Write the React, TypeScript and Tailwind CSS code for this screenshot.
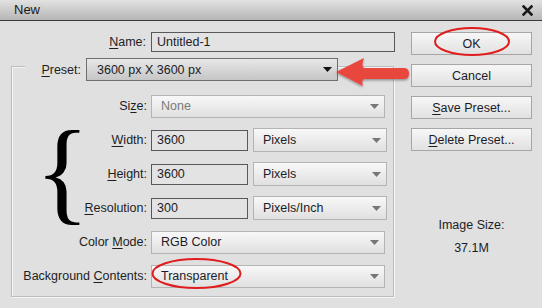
import React from "react";

const U = ({ c }: { c: string }) => <span className="underline underline-offset-[2px] decoration-1">{c}</span>;

function Arrow({ color }: { color: string }) {
  return (
    <svg width="9" height="5" viewBox="0 0 9 5" className="shrink-0">
      <polygon points="0,0 9,0 4.5,5" fill={color} />
    </svg>
  );
}

function Select({
  text,
  w,
  variant = "light",
  h = "h-[24px]",
}: {
  text: string;
  w: string;
  variant?: "light" | "dark" | "disabled";
  h?: string;
}) {
  const base =
    variant === "dark"
      ? "bg-gradient-to-b from-[#e8e8e8] to-[#c6c6c6] border-[#6e6e6e] pl-[10px] pr-[5px]"
      : "bg-gradient-to-b from-[#f8f8f8] to-[#e0e0e0] border-[#b4b4b4] pl-[9px] pr-[5px]";
  const txt = variant === "disabled" ? "text-[#7a7a7a]" : "text-[#1c1c28]";
  return (
    <div className={`${w} ${h} ${base} border box-border flex items-center justify-between shrink-0`}>
      <span className={txt}>{text}</span>
      <Arrow color={variant === "dark" ? "#111111" : "#767676"} />
    </div>
  );
}

function Input({ text, w }: { text: string; w: string }) {
  return (
    <div className={`${w} h-[21px] border border-[#585858] bg-[#e3e3e3] box-border flex items-center pl-[5px] text-[#1c1c28] shrink-0`}>
      {text}
    </div>
  );
}

function Button({ children }: { children: React.ReactNode }) {
  return (
    <div className="w-[121px] h-[23px] border border-[#a6a6a6] box-border bg-gradient-to-b from-[#f7f7f7] to-[#e1e1e1] flex items-center justify-center text-[#1c1c28]">
      {children}
    </div>
  );
}

export default function App() {
  return (
    <div
      className="relative w-[542px] h-[308px] overflow-hidden bg-[#e0e0e0] text-[12.5px] leading-[16px] text-[#1e1e1e]"
      style={{ fontFamily: "'Liberation Sans', Arial, sans-serif" }}
    >
      {/* title bar */}
      <div className="h-[21px] box-border border-b border-[#3a3a3a] bg-gradient-to-b from-[#e2e2e2] to-[#b6b6b6] flex items-center justify-between pl-[14px] pr-[9px]">
        <span className="text-[13px] text-[#1a1a1a]">New</span>
        <svg width="11" height="11" viewBox="0 0 11 11">
          <path d="M1.5 1.5 L9.5 9.5 M9.5 1.5 L1.5 9.5" stroke="#1a1a1a" strokeWidth="2.6" strokeLinecap="square" />
        </svg>
      </div>

      <div className="flex">
        {/* left column */}
        <div className="pl-[11px] pt-[11px] w-[400px]">
          {/* name row */}
          <div className="flex items-center h-[20px]">
            <div className="w-[136px] text-right pr-[1px]">
              <U c="N" />ame:
            </div>
            <div className="w-[4px]" />
            <div className="w-[244px] h-[20px] border border-[#585858] bg-[#e3e3e3] box-border flex items-center pl-[5px] text-[#1c1c28]">
              Untitled-1
            </div>
          </div>

          {/* frame */}
          <div className="mt-[14px] w-[383px] h-[231px] box-border border border-[#bcbcbc] shadow-[1px_1px_0_#f6f6f6,inset_1px_1px_0_#f6f6f6]">
            {/* preset row */}
            <div className="-mt-[9px] flex items-center h-[23px]">
              <div className="ml-[13px] w-[57px] h-[23px] bg-[#e0e0e0] flex items-center justify-end pr-[1px]">
                <span>
                  <U c="P" />reset:
                </span>
              </div>
              <div className="w-[4px] h-[23px] bg-[#e0e0e0]" />
              <Select text="3600 px X 3600 px" w="w-[252px]" variant="dark" h="h-[23px]" />
            </div>

            <div className="mt-[13px] flex flex-col gap-[10px]">
              {/* size */}
              <div className="flex items-center h-[24px]">
                <div className="w-[135px] text-right">
                  Si<U c="z" />e:
                </div>
                <div className="w-[4px]" />
                <Select text="None" w="w-[234px]" variant="disabled" h="h-[23px]" />
              </div>

              {/* brace group */}
              <div className="flex">
                <div className="w-[66px] h-[92px] flex items-center justify-start pl-[23px] overflow-visible">
                  <span
                    className="text-[114px] leading-none text-black -mt-[4px] tracking-[-14px]"
                    style={{ fontFamily: "'Liberation Serif', 'Times New Roman', serif" }}
                  >
                    {"{"}
                  </span>
                </div>
                <div className="flex flex-col gap-[10px]">
                  <div className="flex items-center h-[24px]">
                    <div className="w-[69px] text-right">
                      <U c="W" />idth:
                    </div>
                    <div className="w-[4px]" />
                    <Input text="3600" w="w-[97px]" />
                    <div className="w-[5px]" />
                    <Select text="Pixels" w="w-[134px]" />
                  </div>
                  <div className="flex items-center h-[24px]">
                    <div className="w-[69px] text-right">
                      <U c="H" />eight:
                    </div>
                    <div className="w-[4px]" />
                    <Input text="3600" w="w-[97px]" />
                    <div className="w-[5px]" />
                    <Select text="Pixels" w="w-[134px]" />
                  </div>
                  <div className="flex items-center h-[24px]">
                    <div className="w-[69px] text-right whitespace-nowrap">
                      <U c="R" />esolution:
                    </div>
                    <div className="w-[4px]" />
                    <Input text="300" w="w-[97px]" />
                    <div className="w-[5px]" />
                    <Select text="Pixels/Inch" w="w-[134px]" />
                  </div>
                </div>
              </div>

              {/* color mode */}
              <div className="flex items-center h-[24px]">
                <div className="w-[135px] text-right">
                  Color <U c="M" />ode:
                </div>
                <div className="w-[4px]" />
                <Select text="RGB Color" w="w-[234px]" h="h-[23px]" />
              </div>

              {/* background */}
              <div className="flex items-center h-[24px]">
                <div className="w-[135px] text-right whitespace-nowrap">
                  Background <U c="C" />ontents:
                </div>
                <div className="w-[4px]" />
                <Select text="Transparent" w="w-[234px]" h="h-[23px]" />
              </div>
            </div>
          </div>
        </div>

        {/* right column */}
        <div className="pl-[11px] pt-[11px] flex flex-col">
          <div className="flex flex-col gap-[9px]">
            <Button>OK</Button>
            <Button>Cancel</Button>
            <Button>
              <span>
                <U c="S" />ave Preset...
              </span>
            </Button>
            <Button>
              <span>
                <U c="D" />elete Preset...
              </span>
            </Button>
          </div>
          <div className="w-[121px] mt-[66px] text-center text-[#1c1c28]">Image Size:</div>
          <div className="w-[121px] mt-[7px] text-center text-[#1c1c28]">37.1M</div>
        </div>
      </div>

      {/* annotations overlay */}
      <svg className="absolute inset-0 pointer-events-none" width="542" height="308" viewBox="0 0 542 308">
        <defs>
          <filter id="sh" x="-20%" y="-20%" width="140%" height="160%">
            <feDropShadow dx="0" dy="1.5" stdDeviation="1.2" floodColor="#000" floodOpacity="0.35" />
          </filter>
        </defs>
        <path
          d="M336 72 L364 58 Q361 66 364 68 L404 68 Q409 68 409 73.5 Q409 79 404 79 L364 79 Q361 81 363 86 Z"
          fill="#e8463e"
          filter="url(#sh)"
        />
        <ellipse cx="472" cy="41.5" rx="37" ry="13.5" fill="none" stroke="#e01c1c" strokeWidth="2" />
        <ellipse cx="196.5" cy="273.5" rx="44" ry="14.5" fill="none" stroke="#e01c1c" strokeWidth="2" />
      </svg>
    </div>
  );
}
